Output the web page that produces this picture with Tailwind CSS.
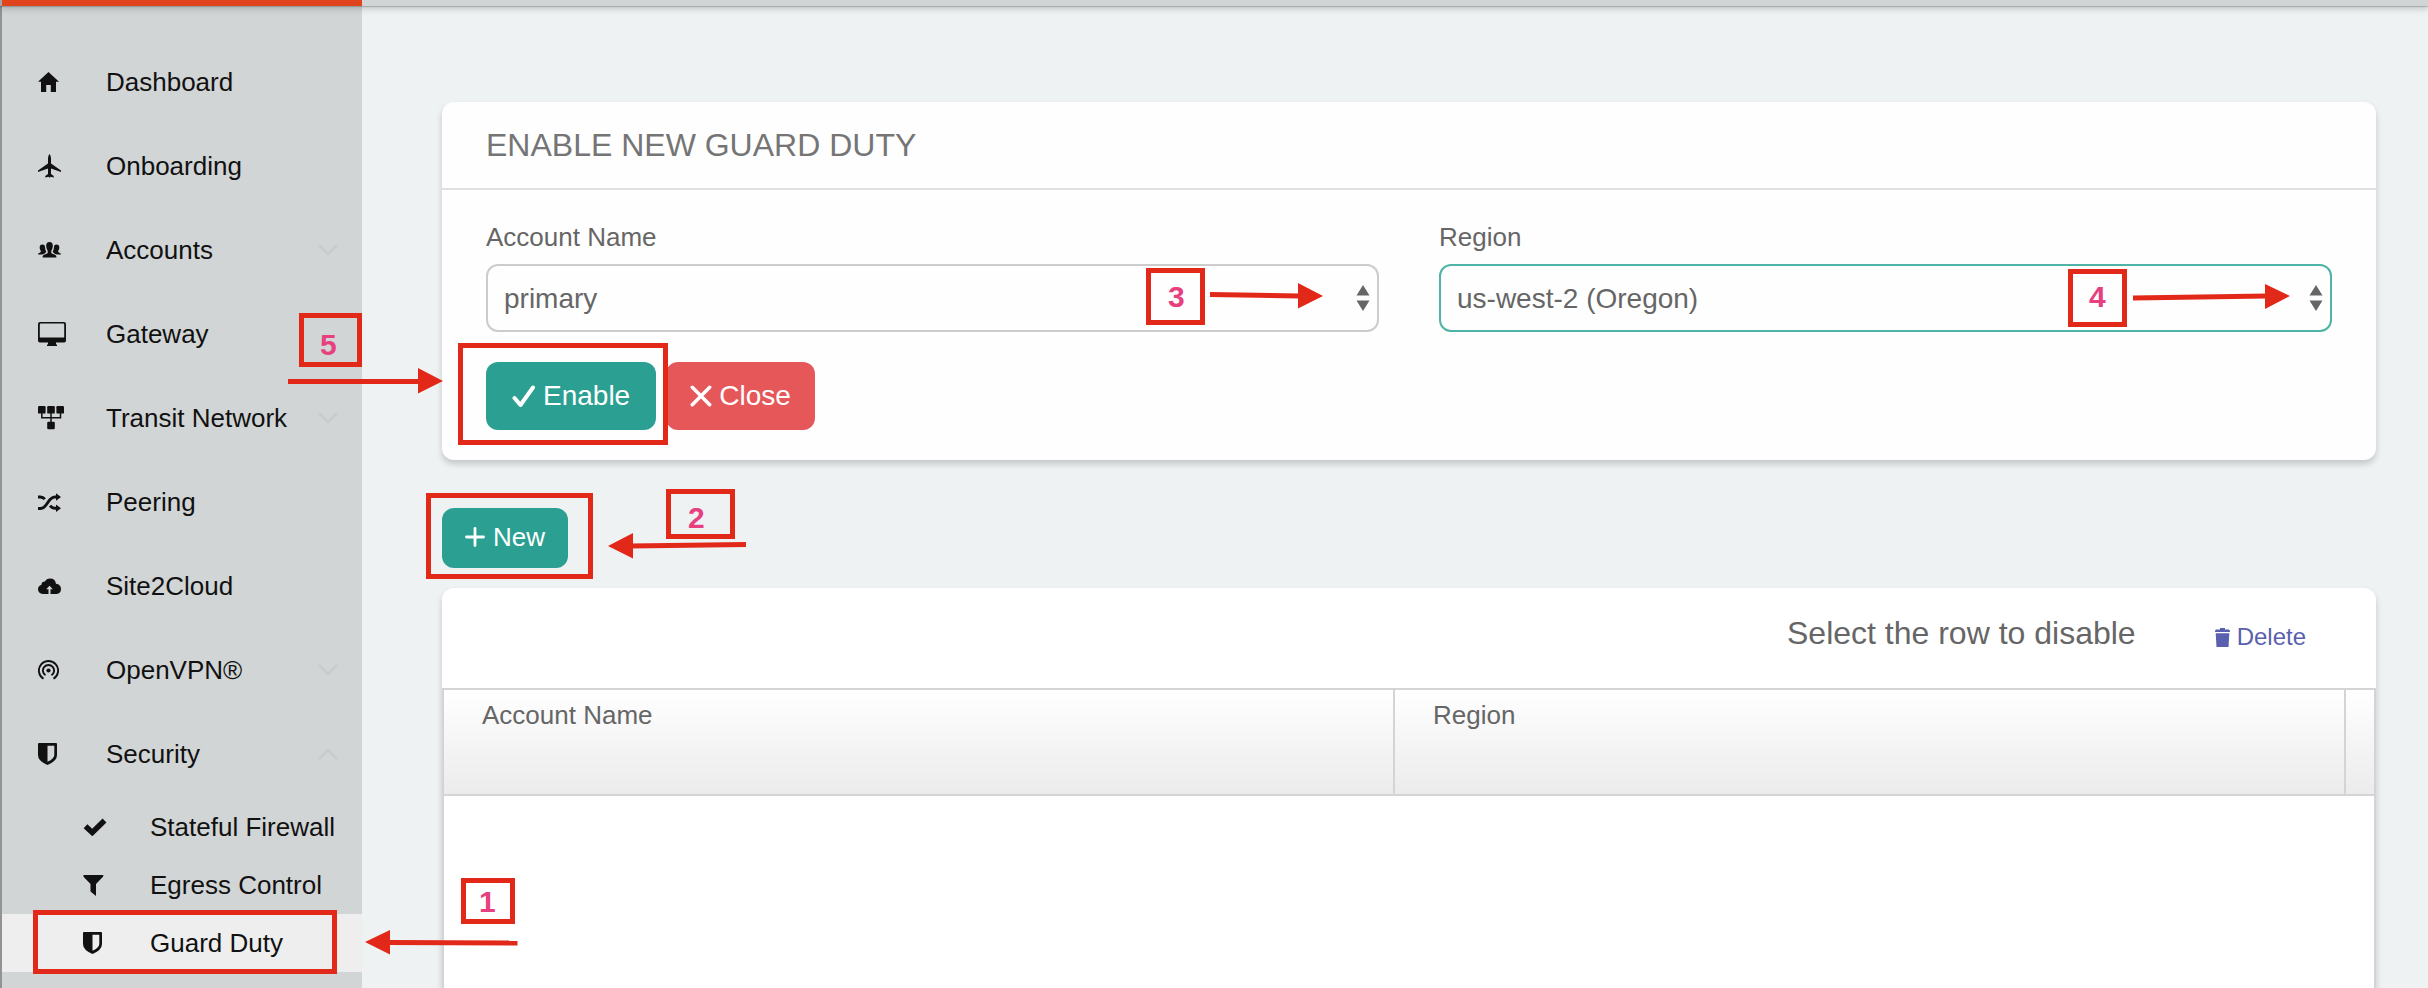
<!DOCTYPE html>
<html lang="en">
<head>
<meta charset="utf-8">
<title>Guard Duty</title>
<script src="https://cdn.jsdelivr.net/npm/@tailwindcss/browser@4"></script>
</head>
<body class="relative flex min-h-screen flex-col overflow-x-hidden bg-[#eef2f3] font-['Liberation_Sans',Arial,sans-serif] text-[26px] text-[#666]">

<!-- Top bar -->
<header class="relative z-10 flex h-[6px] shadow-[0_1px_1px_#00000030,0_3px_6px_#00000030]">
  <div class="w-[2px] bg-[#a4a4a6]"></div>
  <div class="w-[360px] bg-[#e1431c]"></div>
  <div class="flex-1 bg-[#d1d5d5]"></div>
</header>

<div class="flex flex-1">
  <!-- Sidebar -->
  <nav aria-label="Main" class="w-[362px] shrink-0 border-l-2 border-[#949295] bg-[#d1d5d5] pt-[34px] text-[#111]">
    <ul>
      <li><a href="#" class="flex h-[84px] items-center pr-6 pl-9">
        <span class="w-[68px]"><svg class="h-5 w-[21px]" viewBox="0 0 21 20" fill="#111"><path d="M10.500 0 21 9.700H18V20H12.800V13H8.200V20H3V9.700H0z"/></svg></span>Dashboard</a></li>
      <li><a href="#" class="flex h-[84px] items-center pr-6 pl-9">
        <span class="w-[68px]"><svg class="h-6 w-[23px]" viewBox="0 0 23 24" fill="#111"><path d="M11.500 0C12.500 1 13 3 13 5V9.500L23 16.500V18L13 14.500V20L15.700 22V23.500L12.300 22.800 11.500 24 10.700 22.800 7.300 23.500V22L10 20V14.500L0 18V16.500L10 9.500V5C10 3 10.500 1 11.500 0z"/></svg></span>Onboarding</a></li>
      <li><a href="#" class="flex h-[84px] items-center pr-6 pl-9">
        <span class="w-[68px]"><svg class="h-4 w-[23px]" viewBox="0 0 23 16" fill="#111"><path d="M11.500 0C14 0 15 1.800 14.800 4.300 14.700 6.500 13.800 8 13.300 8.800V11C14.500 12.300 18.500 12 18.500 15.500H4.500C4.500 12 8.500 12.300 9.700 11V8.800C9.200 8 8.300 6.500 8.200 4.300 8 1.800 9 0 11.500 0z"/><path d="M4.500 2.500C6.200 2.500 6.900 3.300 7 5 7.100 7 7.600 8.300 8.300 9.800L6.800 11.500 4.200 12.500H0C0 10.500 2.200 11 2.800 9.700V8.800C2 8 1.600 6.500 1.700 5 1.800 3.300 2.800 2.500 4.500 2.500z"/><path d="M18.500 2.500C16.800 2.500 16.100 3.300 16 5 15.900 7 15.400 8.300 14.700 9.800L16.200 11.500 18.800 12.500H23C23 10.500 20.800 11 20.200 9.700V8.800C21 8 21.400 6.500 21.300 5 21.200 3.300 20.200 2.500 18.500 2.500z"/></svg></span>Accounts
        <svg class="ml-auto h-3 w-5" viewBox="0 0 20 12" fill="none" stroke="#cbcccc" stroke-width="3"><path d="M1 1 10 10 19 1"/></svg></a></li>
      <li><a href="#" class="flex h-[84px] items-center pr-6 pl-9">
        <span class="w-[68px]"><svg class="h-6 w-7" viewBox="0 0 28 24" fill="#111"><path fill-rule="evenodd" d="M2 0H26Q28 0 28 2V18.500Q28 20.500 26 20.500H18V22.500H19V24H9V22.500H10V20.500H2Q0 20.500 0 18.500V2Q0 0 2 0zM2.700 1.500Q1.800 1.500 1.800 2.400V15.500H26.200V2.400Q26.200 1.500 25.300 1.500z"/></svg></span>Gateway</a></li>
      <li><a href="#" class="flex h-[84px] items-center pr-6 pl-9">
        <span class="w-[68px]"><svg class="h-6 w-[26px]" viewBox="0 0 26 24" fill="#111"><rect width="7.600" height="7.600" rx="1.200"/><rect x="9.200" width="7.600" height="7.600" rx="1.200"/><rect x="18.400" width="7.600" height="7.600" rx="1.200"/><rect x="9.200" y="15.700" width="7.600" height="7.600" rx="1.200"/><path fill="none" stroke="#111" stroke-width="1.500" d="M3.800 7V11.700H22.500V7M13 7V16"/></svg></span>Transit Network
        <svg class="ml-auto h-3 w-5" viewBox="0 0 20 12" fill="none" stroke="#cbcccc" stroke-width="3"><path d="M1 1 10 10 19 1"/></svg></a></li>
      <li><a href="#" class="flex h-[84px] items-center pr-6 pl-9">
        <span class="w-[68px]"><svg class="h-[19px] w-[23px]" viewBox="0 0 23 19" fill="none" stroke="#111" stroke-width="2.900"><path d="M0 15.500H2.500C9.500 15.500 9.500 4 17 4H19M0 4H2.500Q5 4 6.800 6.200M12 12.800Q14 15.200 17 15.200H19"/><path fill="#111" stroke="none" d="M18 .300 23 4 18 7.700zM18 11.500 23 15.200 18 18.900z"/></svg></span>Peering</a></li>
      <li><a href="#" class="flex h-[84px] items-center pr-6 pl-9">
        <span class="w-[68px]"><svg class="h-[17px] w-[23px]" viewBox="0 0 23 17" fill="#111"><path fill-rule="evenodd" d="M5 16Q0 15.500 0 11.300 0 7.800 3.500 6.800 3.500 3.500 7 3.500 8.300 .500 12.200 .500 17.200 .500 18 5.800 23 6.500 23 11 23 15.500 18.500 16H12.500V11.200H14.800L11.500 7.700 8.200 11.200H10.500V16z"/></svg></span>Site2Cloud</a></li>
      <li><a href="#" class="flex h-[84px] items-center pr-6 pl-9">
        <span class="w-[68px]"><svg class="h-5 w-[21px]" viewBox="0 0 21 20" fill="none" stroke="#111" stroke-width="1.900"><circle cx="10.500" cy="10.500" r="2.100" fill="#111" stroke="none"/><path d="M7.500 15.300A5.600 5.600 0 1 1 13.500 15.300M5.500 18.800A9.600 9.600 0 1 1 15.500 18.800"/></svg></span>OpenVPN®
        <svg class="ml-auto h-3 w-5" viewBox="0 0 20 12" fill="none" stroke="#cbcccc" stroke-width="3"><path d="M1 1 10 10 19 1"/></svg></a></li>
      <li>
        <a href="#" class="flex h-[84px] items-center pr-6 pl-9">
        <span class="w-[68px]"><svg class="h-[22px] w-[19px]" viewBox="0 0 19 22" fill="#111"><path fill-rule="evenodd" d="M1 0H18Q19 0 19 1V12Q19 18 9.500 22 0 18 0 12V1Q0 0 1 0zM9.500 2.700V18.800Q16.300 15.500 16.300 12V2.700z"/></svg></span>Security
        <svg class="ml-auto h-3 w-5" viewBox="0 0 20 12" fill="none" stroke="#cbcccc" stroke-width="3"><path d="M1 11 10 2 19 11"/></svg></a>
        <ul class="pt-[2px]">
          <li><a href="#" class="flex h-[58px] items-center pl-[81px]">
            <span class="w-[67px]"><svg class="h-[18px] w-[24px]" viewBox="0 0 24 18" fill="none" stroke="#111" stroke-width="5.500"><path d="M2.500 8.300 9.300 14.500 21.500 2.500"/></svg></span>Stateful Firewall</a></li>
          <li><a href="#" class="flex h-[58px] items-center pl-[81px]">
            <span class="w-[67px]"><svg class="h-[21px] w-[21px]" viewBox="0 0 21 21" fill="#111"><path d="M.500 0H20.500L20 1.800 13 9V21L7.500 16.500V9L.500 1.800z"/></svg></span>Egress Control</a></li>
          <li><a href="#" aria-current="page" class="flex h-[58px] items-center bg-[#eee] pl-[81px]">
            <span class="w-[67px]"><svg class="h-[22px] w-[19px]" viewBox="0 0 19 22" fill="#111"><path fill-rule="evenodd" d="M1 0H18Q19 0 19 1V12Q19 18 9.500 22 0 18 0 12V1Q0 0 1 0zM9.500 2.700V18.800Q16.300 15.500 16.300 12V2.700z"/></svg></span>Guard Duty</a></li>
        </ul>
      </li>
    </ul>
  </nav>

  <!-- Content -->
  <main class="flex min-w-0 flex-1 flex-col items-start pt-24 pr-[52px] pl-20">
    <section class="w-full rounded-xl bg-[#fefefe] shadow-[0_4px_6px_#0000002e]">
      <h1 class="flex h-[88px] items-center border-b-2 border-[#e0e0e0] px-11 text-[32px] text-[#757575]">ENABLE NEW GUARD DUTY</h1>
      <form class="px-11 pt-7 pb-[30px]">
        <div class="grid grid-cols-2 gap-[60px]">
          <div>
            <label for="account" class="block leading-[38px]">Account Name</label>
            <div class="relative mt-2">
              <select id="account" class="h-[68px] w-full appearance-none rounded-xl border-2 border-[#ccc] bg-transparent px-4 pt-[2px] text-[28px] text-[#666]"><option>primary</option></select>
              <svg class="pointer-events-none absolute top-[21px] right-[9px] h-[26px] w-[14px]" viewBox="0 0 14 26" fill="#666"><path d="M7 0 13.500 10.500H.500zM7 26 13.500 15.500H.500z"/></svg>
            </div>
          </div>
          <div>
            <label for="region" class="block leading-[38px]">Region</label>
            <div class="relative mt-2">
              <select id="region" class="h-[68px] w-full appearance-none rounded-xl border-2 border-[#4fb3a6] bg-transparent px-4 pt-[2px] text-[28px] text-[#666]"><option>us-west-2 (Oregon)</option></select>
              <svg class="pointer-events-none absolute top-[21px] right-[9px] h-[26px] w-[14px]" viewBox="0 0 14 26" fill="#666"><path d="M7 0 13.500 10.500H.500zM7 26 13.500 15.500H.500z"/></svg>
            </div>
          </div>
        </div>
        <div class="mt-[30px] flex gap-[10px] text-[28px] text-white">
          <button type="button" class="flex h-[68px] items-center gap-[7px] rounded-xl bg-[#2b9f91] px-[26px]">
            <svg class="h-[23px] w-6" viewBox="0 0 24 23" fill="none" stroke="#fff" stroke-width="4" stroke-linecap="round" stroke-linejoin="round"><path d="M2.500 13 8.500 20 21 2.500"/></svg>Enable</button>
          <button type="button" class="flex h-[68px] items-center gap-[7px] rounded-xl bg-[#e65759] px-6">
            <svg class="h-[22px] w-[22px]" viewBox="0 0 22 22" fill="none" stroke="#fff" stroke-width="3.500" stroke-linecap="round"><path d="M2.300 2.300 19.700 19.700M19.700 2.300 2.300 19.700"/></svg>Close</button>
        </div>
      </form>
    </section>

    <button type="button" class="mt-12 flex h-[60px] items-center gap-2 rounded-xl bg-[#2b9f91] px-[23px] pb-[2px] text-white">
      <svg class="h-5 w-5" viewBox="0 0 20 20" fill="none" stroke="#fff" stroke-width="2.800" stroke-linecap="round"><path d="M10 1.500V18.500M1.500 10H18.500"/></svg>New</button>

    <section class="mt-5 flex w-full flex-1 flex-col rounded-t-xl bg-white shadow-[0_4px_6px_#0000002e]">
      <div class="flex h-[100px] items-center justify-end gap-[79px] pr-[70px] pb-[10px]">
        <p class="text-[32px]">Select the row to disable</p>
        <button type="button" class="flex items-center gap-[7px] pt-2 text-2xl text-[#5a5fae]">
          <svg class="h-[19px] w-[15px]" viewBox="0 0 15 19" fill="#5a5fae"><path d="M5 0H10V1.500H14Q15 1.500 15 4H0Q0 1.500 1 1.500H5zM.700 5.300H14.300L13.500 19H1.500z"/></svg>Delete</button>
      </div>
      <div class="flex-1 border-x-2 border-t-2 border-[#d4d4d4]">
        <table class="w-full table-fixed border-separate border-spacing-0 text-left">
          <thead>
            <tr class="h-[106px] bg-linear-to-b from-white to-[#ebebeb] align-top">
              <th class="border-r-2 border-b-2 border-[#d4d4d4] px-[38px] pt-2 leading-[34px] font-normal">Account Name</th>
              <th class="border-r-2 border-b-2 border-[#d4d4d4] px-[38px] pt-2 leading-[34px] font-normal">Region</th>
              <th class="w-7 border-b-2 border-[#d4d4d4]"></th>
            </tr>
          </thead>
          <tbody></tbody>
        </table>
      </div>
    </section>
  </main>
</div>

<!-- Numbered walkthrough annotations -->
<svg class="pointer-events-none absolute inset-0 z-20 h-full w-full text-[30px] font-bold" fill="none" stroke="#e22819" stroke-width="5">
  <rect x="35.500" y="912.500" width="299" height="59"/>
  <rect x="463.500" y="880.500" width="49" height="41"/>
  <path d="M388 942.500 517.500 943"/>
  <rect x="428.500" y="495.500" width="162" height="81"/>
  <rect x="668.500" y="491.500" width="64" height="45"/>
  <path d="M631 546 746 544.500"/>
  <rect x="1148.500" y="270.500" width="54" height="52"/>
  <path d="M1210 294.500 1300 296"/>
  <rect x="2070.500" y="271.500" width="54" height="53"/>
  <path d="M2133 298 2267 296"/>
  <rect x="301.500" y="315.500" width="58" height="49"/>
  <path d="M288 381.500H420"/>
  <rect x="460.500" y="345.500" width="205" height="97"/>
  <g fill="#e22819" stroke="none">
    <path d="M365 942 390 930V954.500zM608 546 633 533V558.500zM1323 296 1298 283V308.500zM2290 296 2265 284V309zM443 381 418 368V393.500z"/>
  </g>
  <g fill="#e6407f" stroke="none">
    <text x="479" y="912">1</text>
    <text x="688" y="528">2</text>
    <text x="1168" y="307">3</text>
    <text x="2089" y="307">4</text>
    <text x="320" y="355">5</text>
  </g>
</svg>
</body>
</html>
